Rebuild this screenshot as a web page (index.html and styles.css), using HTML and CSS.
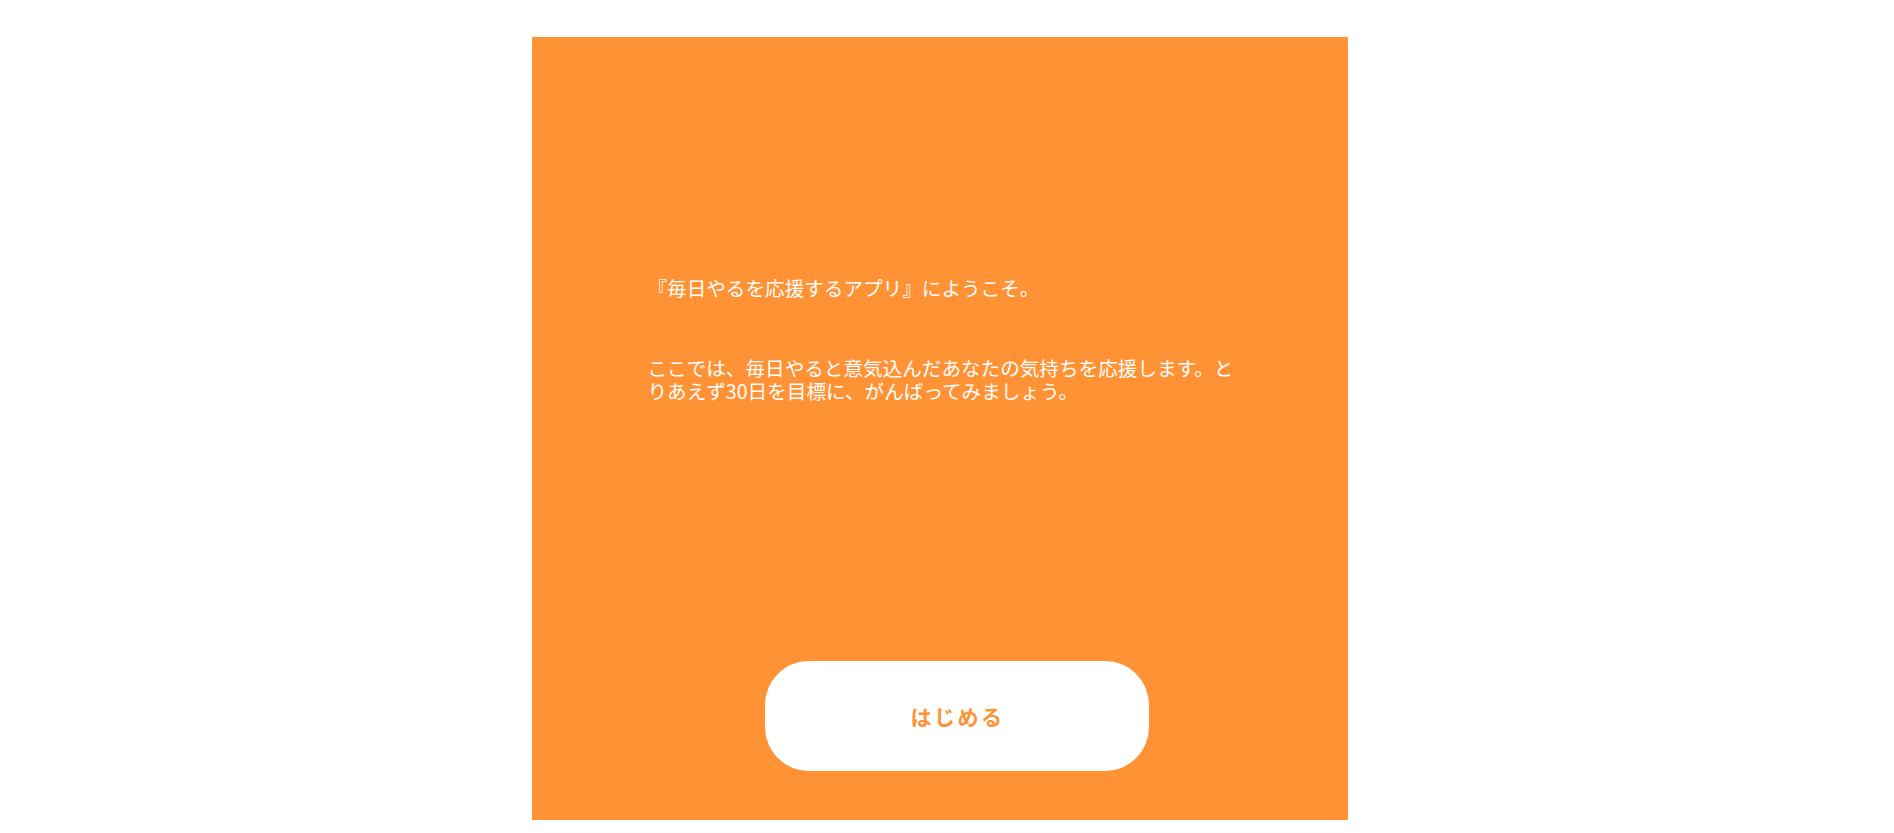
FILE: index.html
```html
<!DOCTYPE html>
<html lang="ja">
<head>
<meta charset="utf-8">
<title>毎日やるを応援するアプリ</title>
<link rel="stylesheet" href="styles.css">
</head>
<body>
<div class="page">
  <main class="panel">
    <div class="intro">
      <p class="welcome">『毎日やるを応援するアプリ』にようこそ。</p>
      <p class="lead">ここでは、毎日やると意気込んだあなたの気持ちを応援します。とりあえず30日を目標に、がんばってみましょう。</p>
    </div>
    <button class="start" type="button">はじめる</button>
  </main>
</div>
</body>
</html>
```

FILE: styles.css
```css
html, body {
  margin: 0;
  padding: 0;
  background: #ffffff;
}

body {
  font-family: "Noto Sans CJK JP", "Noto Sans", sans-serif;
}

.page {
  display: flex;
  justify-content: center;
  padding: 37px 15px 0 0;
}

.panel {
  width: 816px;
  height: 783px;
  box-sizing: border-box;
  background: #ff9234;
  display: flex;
  flex-direction: column;
  padding: 239px 110px 49px 116px;
}

.intro {
  color: #ffffff;
  font-size: 19.6px;
  line-height: 23px;
}

.intro p {
  margin: 0;
}

.welcome {
  margin-bottom: 57px !important;
}

.start {
  margin-top: auto;
  align-self: flex-start;
  margin-left: 117px;
  width: 384px;
  height: 110px;
  border: none;
  border-radius: 44px;
  background: #ffffff;
  color: #ff9234;
  font-family: "Noto Sans CJK JP", "Noto Sans", sans-serif;
  font-size: 21px;
  font-weight: 700;
  letter-spacing: 2.5px;
  padding: 0 0 0 2px;
  cursor: pointer;
}
```
